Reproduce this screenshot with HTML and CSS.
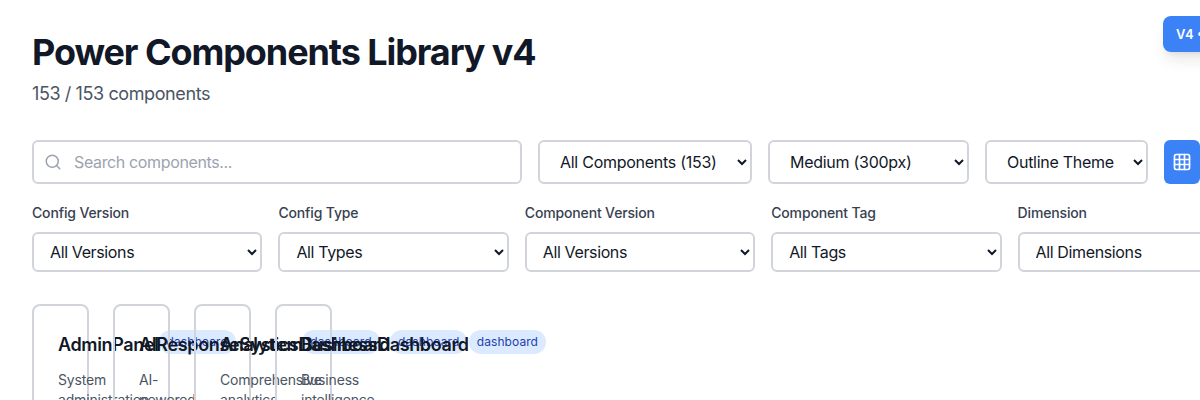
FILE: index.html
```html
<!DOCTYPE html>
<html lang="en">
<head>
<meta charset="utf-8">
<title>Power Components Library v4</title>
<link rel="stylesheet" href="styles.css">
</head>
<body>
<div class="version-badge">V4 • Power</div>
<main class="page">
  <header class="header">
    <h1 class="title">Power Components Library v4</h1>
    <p class="count">153 / 153 components</p>
  </header>
  <div class="toolbar">
    <div class="search">
      <svg class="search-icon" viewBox="0 0 24 24" fill="none" stroke="currentColor" stroke-width="2" stroke-linecap="round" stroke-linejoin="round"><circle cx="11" cy="11" r="8"/><path d="m21 21-4.35-4.35"/></svg>
      <input class="search-input" type="text" placeholder="Search components...">
    </div>
    <select class="select category"><option>All Components (153)</option></select>
    <select class="select size"><option>Medium (300px)</option></select>
    <select class="select theme"><option>Outline Theme</option></select>
    <button class="grid-button" aria-label="Grid view"><svg class="grid-icon" viewBox="0 0 24 24" fill="none" stroke="currentColor" stroke-width="2" stroke-linecap="round" stroke-linejoin="round"><rect x="3" y="3" width="18" height="18" rx="2"/><path d="M3 9h18M3 15h18M9 3v18M15 3v18"/></svg></button>
  </div>
  <div class="filters">
    <label class="filter">Config Version<select class="select compact"><option>All Versions</option></select></label>
    <label class="filter">Config Type<select class="select compact"><option>All Types</option></select></label>
    <label class="filter">Component Version<select class="select compact"><option>All Versions</option></select></label>
    <label class="filter">Component Tag<select class="select compact"><option>All Tags</option></select></label>
    <label class="filter">Dimension<select class="select compact"><option>All Dimensions</option></select></label>
  </div>
  <section class="cards">
    <article class="card"><div class="card-head"><h3 class="card-title">AdminPanel</h3><span class="tag">dashboard</span></div><p class="card-text">System administration</p></article>
    <article class="card"><div class="card-head"><h3 class="card-title">AIResponseSystem</h3><span class="tag">dashboard</span></div><p class="card-text">AI-powered</p></article>
    <article class="card"><div class="card-head"><h3 class="card-title">AnalyticsDashboard</h3><span class="tag">dashboard</span></div><p class="card-text">Comprehensive analytics</p></article>
    <article class="card"><div class="card-head"><h3 class="card-title">BusinessDashboard</h3><span class="tag">dashboard</span></div><p class="card-text">Business intelligence</p></article>
  </section>
</main>
</body>
</html>
```
FILE: styles.css
```css
* { box-sizing: border-box; margin: 0; }
html { overflow: hidden; }
body {
  height: 400px;
  overflow: hidden;
  position: relative;
  background: #fff;
  color: #111827;
  font-family: Inter, "Liberation Sans", sans-serif;
}
.page { width: 1280px; padding: 32px; }
.title { font-size: 36px; line-height: 40px; font-weight: 700; letter-spacing: -1.08px; white-space: nowrap; }
.count { margin-top: 8px; font-size: 18px; line-height: 28px; color: #4b5563; letter-spacing: -0.4px; }
.toolbar { display: flex; gap: 16px; height: 44px; margin-top: 32px; }
.search { position: relative; width: 490px; flex: none; }
.search-icon { position: absolute; left: 12px; top: 13px; width: 18px; height: 18px; color: #9ca3af; }
.search-input {
  width: 100%;
  height: 44px;
  padding: 0 16px 0 40px;
  border: 2px solid #d1d5db;
  border-radius: 6px;
  font: inherit;
  font-size: 16px;
  letter-spacing: -0.36px;
}
.search-input::placeholder { color: #9ca3af; }
.select {
  flex: none;
  padding: 0 16px;
  border: 2px solid #d1d5db;
  border-radius: 6px;
  background: #fff;
  color: #111827;
  font: inherit;
  font-size: 16px;
  letter-spacing: -0.27px;
}
.category { width: 214px; }
.size { width: 201px; }
.theme { width: 163px; }
.grid-button {
  flex: none;
  width: 36px;
  padding: 0;
  display: grid;
  place-items: center;
  border: 0;
  border-radius: 6px;
  background: #3b82f6;
  color: #fff;
}
.grid-icon { width: 20px; height: 20px; }
.filters { display: grid; grid-template-columns: repeat(5, 230.4px); gap: 16px; margin-top: 19px; }
.filter { display: flex; flex-direction: column; gap: 9px; font-size: 14px; line-height: 20px; font-weight: 500; color: #374151; letter-spacing: -0.15px; }
.compact { height: 40px; padding: 0 12px; font-weight: 400; letter-spacing: -0.37px; }
.cards { display: grid; grid-template-columns: repeat(4, 57px); gap: 24px; margin-top: 32px; }
.card { position: relative; height: 200px; padding: 24px; border: 2px solid #d1d5db; border-radius: 8px; }
.card-head { display: flex; align-items: flex-start; width: 5px; }
.card-title { flex: none; font-size: 18px; line-height: 29px; font-weight: 600; letter-spacing: -0.36px; }
.tag { flex: none; padding: 4px 8px; border-radius: 12px; background: #dbeafe; color: #1e40af; font-size: 12px; line-height: 16px; letter-spacing: 0.08px; }
.card-text { width: 5px; margin-top: 11px; font-size: 14px; line-height: 20px; color: #4b5563; letter-spacing: -0.17px; }
.version-badge {
  position: absolute;
  left: 1163px;
  top: 16px;
  padding: 8px 12px 8px 13px;
  border-radius: 8px;
  background: #3b82f6;
  color: #fff;
  font-size: 13px;
  line-height: 20px;
  font-weight: 600;
  white-space: nowrap;
  box-shadow: 0 10px 15px -3px rgba(0, 0, 0, .1), 0 4px 6px -4px rgba(0, 0, 0, .1);
}
```
